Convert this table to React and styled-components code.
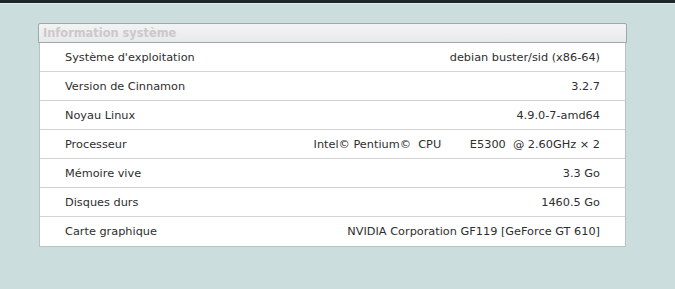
import React from 'react';
import styled, { createGlobalStyle } from 'styled-components';

const Global = createGlobalStyle`
  html, body {
    margin: 0;
    padding: 0;
    background: #cbdddc;
  }
  body {
    font-family: "DejaVu Sans", sans-serif;
  }
`;

const Page = styled.div`
  width: 675px;
  height: 289px;
  background: #cbdddc;
  border-top: 3px solid #1c2827;
  box-shadow: inset 0 1px 0 #dcebea;
  box-sizing: border-box;
  padding: 20px 0 0 38px;
`;

const Panel = styled.div`
  width: 589px;
`;

const Header = styled.div`
  height: 18px;
  border: 1px solid #9ea8a8;
  border-radius: 2px 2px 0 0;
  background: linear-gradient(#f2f3f4, #e7e9ea);
  color: #cdc8c9;
  font-size: 11.4px;
  font-weight: bold;
  line-height: 19px;
  padding-left: 4px;
`;

const Body = styled.div`
  margin: 0 1px;
  background: #fff;
  border-left: 1px solid #b9c2c2;
  border-right: 1px solid #b9c2c2;
  border-bottom: 1px solid #b9c2c2;
`;

const Row = styled.div`
  display: flex;
  justify-content: space-between;
  align-items: center;
  height: 27px;
  padding: 1px 25px 0 25px;
  font-size: 11.3px;
  color: #2e2e2e;
  border-bottom: 1px solid ${p => (p.last ? 'transparent' : '#d2d4d4')};
`;

const Label = styled.span``;

const Value = styled.span`
  white-space: pre;
`;

const rows = [
  ['Système d\'exploitation', 'debian buster/sid (x86-64)'],
  ['Version de Cinnamon', '3.2.7'],
  ['Noyau Linux', '4.9.0-7-amd64'],
  ['Processeur', 'Intel© Pentium©  CPU        E5300  @ 2.60GHz × 2'],
  ['Mémoire vive', '3.3 Go'],
  ['Disques durs', '1460.5 Go'],
  ['Carte graphique', 'NVIDIA Corporation GF119 [GeForce GT 610]'],
];

export default function App() {
  return (
    <>
      <Global />
      <Page>
        <Panel>
          <Header>Information système</Header>
          <Body>
            {rows.map((r, i) => (
              <Row key={r[0]} last={i === rows.length - 1}>
                <Label>{r[0]}</Label>
                <Value>{r[1]}</Value>
              </Row>
            ))}
          </Body>
        </Panel>
      </Page>
    </>
  );
}
